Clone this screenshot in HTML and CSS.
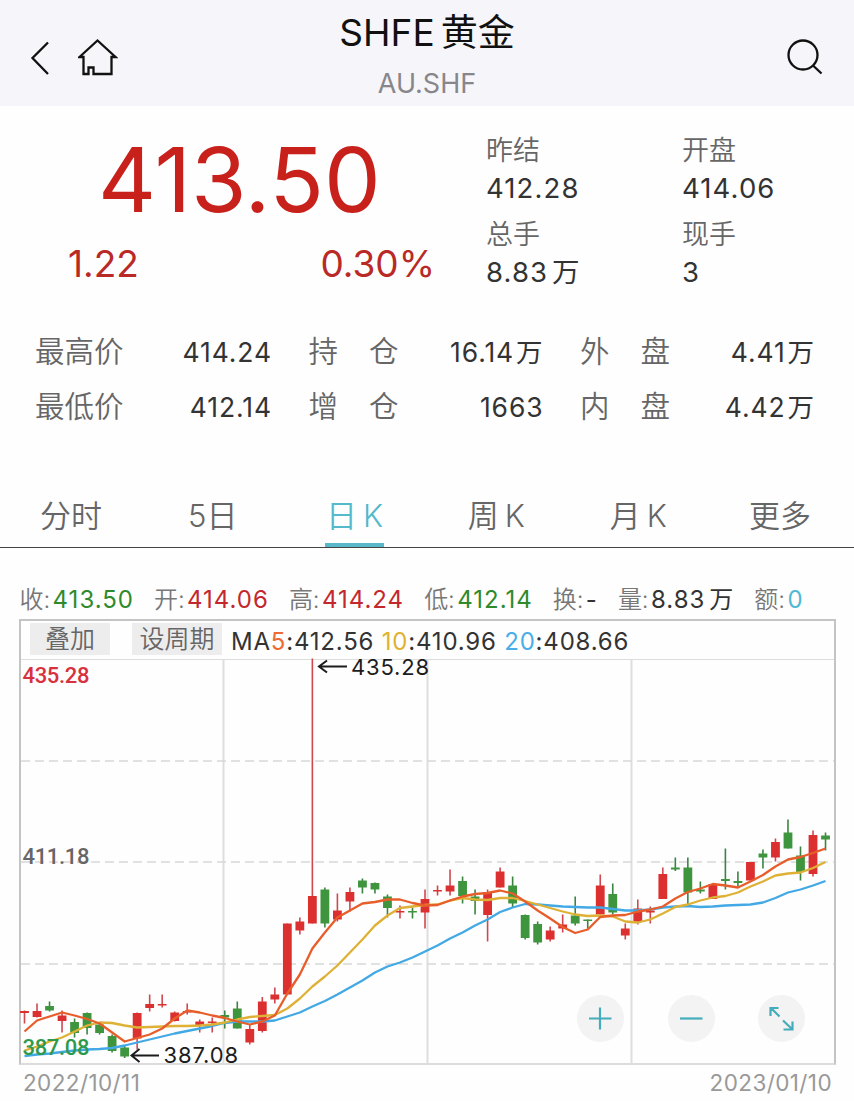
FILE: index.html
```html
<!DOCTYPE html>
<html lang="zh-CN">
<head>
    <meta charset="UTF-8">
    <meta name="viewport" content="width=device-width, initial-scale=1.0">
    <title>SHFE黄金</title>
    <link rel="stylesheet" href="styles.css">
</head>
<body>
    <header class="header">
        <div class="header-nav">
            <svg class="icon-back" width="20" height="36" viewBox="0 0 20 36"><path d="M18 2.500 L2.500 18 L18 34"/></svg>
            <svg class="icon-home" width="40" height="38" viewBox="0 0 40 38"><path d="M1.500 19 L19.500 2.500 L37.500 19 H33.500 V36 H15.500 V29.500 H10.500 V36 H5.500 V19 Z"/></svg>
        </div>
        <div class="header-title">
            <h1><span class="name-en">SHFE</span>黄金</h1>
            <p>AU.SHF</p>
        </div>
        <svg class="icon-search" width="38" height="38" viewBox="0 0 38 38"><circle cx="17" cy="17" r="14.500"/><path d="M27 27.500 L35.500 35.500"/></svg>
    </header>

    <section class="quote">
        <div class="quote-main">
            <div class="price">413.50</div>
            <div class="change"><span>1.22</span><span class="percent">0.30%</span></div>
        </div>
        <dl class="quote-side">
            <div><dt>昨结</dt><dd>412.28</dd></div>
            <div><dt>开盘</dt><dd>414.06</dd></div>
            <div><dt>总手</dt><dd>8.83<i>万</i></dd></div>
            <div><dt>现手</dt><dd>3</dd></div>
        </dl>
    </section>

    <section class="stats">
        <div class="stat"><span class="label">最高价</span><span class="value">414.24</span></div>
        <div class="stat"><span class="label wide">持仓</span><span class="value">16.14<i>万</i></span></div>
        <div class="stat"><span class="label wide">外盘</span><span class="value">4.41<i>万</i></span></div>
        <div class="stat"><span class="label">最低价</span><span class="value">412.14</span></div>
        <div class="stat"><span class="label wide">增仓</span><span class="value">1663</span></div>
        <div class="stat"><span class="label wide">内盘</span><span class="value">4.42<i>万</i></span></div>
    </section>

    <nav class="tabs">
        <a class="tab">分时</a>
        <a class="tab">5日</a>
        <a class="tab active">日<b>K</b></a>
        <a class="tab">周<b>K</b></a>
        <a class="tab">月<b>K</b></a>
        <a class="tab">更多</a>
    </nav>

    <div class="ohlc">
        <span>收:<b class="green">413.50</b></span>
        <span>开:<b class="red">414.06</b></span>
        <span>高:<b class="red">414.24</b></span>
        <span>低:<b class="green">412.14</b></span>
        <span>换:<b>-</b></span>
        <span>量:<b>8.83<i>万</i></b></span>
        <span>额:<b class="cyan">0</b></span>
    </div>

    <main class="chart">
        <div class="chart-bar">
            <button class="btn">叠加</button>
            <button class="btn btn-period">设周期</button>
            <span class="ma">MA<span class="ma5">5</span>:412.56 <span class="ma10">10</span>:410.96 <span class="ma20">20</span>:408.66</span>
        </div>
        <svg class="plot" id="plot" width="813" height="405" viewBox="21 659.500 813 405">
            <g class="grid">
                <path d="M223.500 659 V1063 M427.500 659 V1063 M631.500 659 V1063"/>
                <path class="dashed" d="M21 760.500 H834 M21 861.500 H834 M21 963.500 H834"/>
            </g>
            <g id="candles"></g>
            <polyline id="ma20" class="line line20"/>
            <polyline id="ma10" class="line line10"/>
            <polyline id="ma5" class="line line5"/>
            <g class="axis">
                <text x="22.500" y="682.500" textLength="67" class="top">435.28</text>
                <text x="22.500" y="863.500" textLength="67">411.18</text>
                <text x="22.500" y="1054" textLength="67" class="bottom">387.08</text>
            </g>
            <g class="mark">
                <path d="M347 666 H319 M327 660 L319 666 L327 672"/>
                <text x="351" y="674.500" textLength="78">435.28</text>
                <path d="M159 1055 H131.500 M139.500 1048.500 L131.500 1055 L139.500 1061.500"/>
                <text x="163.500" y="1062" textLength="74.500">387.08</text>
            </g>
        </svg>
        <div class="zoom">
            <button class="zoom-btn"><svg width="47" height="47" viewBox="0 0 47 47"><path d="M12 23.500 H34.500 M23 12.500 V34.500"/></svg></button>
            <button class="zoom-btn"><svg width="47" height="47" viewBox="0 0 47 47"><path d="M12 23.500 H34.500"/></svg></button>
            <button class="zoom-btn"><svg width="47" height="47" viewBox="0 0 47 47"><path d="M21.500 21.500 L13 13 M12.500 21 V13 H20.500 M25 25.500 L34 34 M34.500 26.500 V34.500 H25.500"/></svg></button>
        </div>
    </main>
    <footer class="dates"><span>2022/10/11</span><span>2023/01/10</span></footer>

    <script src="chart.js"></script>
</body>
</html>
```
FILE: styles.css
```css
* {
    box-sizing: border-box;
    margin: 0;
    padding: 0;
}
body {
    width: 854px;
    height: 1101px;
    overflow: hidden;
    background: #fefefe;
    color: #333;
    font-family: Inter, "Noto Sans CJK SC", sans-serif;
}
b, i {
    font-style: normal;
    font-weight: inherit;
}
button {
    border: 0;
    font-family: inherit;
}
svg {
    display: block;
    fill: none;
}

/* header */
.header {
    display: flex;
    justify-content: space-between;
    height: 106px;
    padding: 0 30px;
    background: #f6f6fa;
}
.header svg {
    stroke: #111;
    stroke-width: 2.3;
}
.header-nav {
    display: flex;
    gap: 28px;
    width: 160px;
    padding-top: 40px;
}
.icon-home {
    margin-top: -2px;
}
.header-title {
    text-align: center;
}
.header-title h1 {
    height: 66px;
    line-height: 66px;
    font-size: 37px;
    font-weight: 400;
    color: #111;
    white-space: nowrap;
}
.name-en {
    margin-right: 6px;
    font-size: 37px;
}
.header-title p {
    line-height: 36px;
    font-size: 27px;
    color: #87878b;
}
.icon-search {
    margin: 38px 0 0 122px;
}

/* quote */
.quote {
    display: flex;
    height: 222px;
    padding-top: 24px;
}
.quote-main {
    width: 486px;
    color: #c8201a;
}
.price {
    padding-left: 98px;
    line-height: 100px;
    font-size: 90px;
}
.change {
    display: flex;
    justify-content: space-between;
    padding: 9px 51px 0 68px;
    line-height: 50px;
    font-size: 37px;
    color: #b92a27;
}
.quote-side {
    display: grid;
    grid-template-columns: 196px 172px;
    grid-auto-rows: 84px;
    padding-top: 2px;
    font-size: 27px;
}
.quote-side dt {
    line-height: 38px;
    font-weight: 350;
    color: #666;
}
.quote-side dd {
    line-height: 37px;
    font-size: 27.5px;
    letter-spacing: 1.1px;
}
.quote-side i {
    margin-left: 4px;
}

/* stats */
.stats {
    display: grid;
    grid-template-columns: 237px 235px 235px;
    column-gap: 36.5px;
    grid-auto-rows: 55px;
    height: 156px;
    padding-left: 35px;
    line-height: 48px;
}
.stat {
    display: flex;
    justify-content: space-between;
}
.label {
    line-height: 46px;
    font-size: 29.5px;
    font-weight: 350;
    color: #666;
}
.wide {
    letter-spacing: 31px;
}
.value {
    font-size: 26.5px;
    letter-spacing: 0.9px;
    white-space: nowrap;
}
.value i {
    margin-left: 2px;
}

/* tabs */
.tabs {
    display: flex;
    height: 64px;
    padding-right: 3px;
    border-bottom: 1px solid #444;
}
.tab {
    position: relative;
    flex: 1;
    line-height: 63px;
    text-align: center;
    font-size: 31px;
    font-weight: 350;
    color: #666;
}
.tab b {
    margin-left: 6px;
}
.active {
    color: #53b9cb;
}
.active::after {
    content: "";
    position: absolute;
    left: 41px;
    bottom: 0;
    width: 59px;
    height: 4px;
    background: #58b7c8;
}

/* open / high / low line */
.ohlc {
    display: flex;
    gap: 20px;
    height: 71px;
    padding: 32px 0 0 19.5px;
    line-height: 40px;
    font-size: 24px;
    font-weight: 350;
    color: #777;
    white-space: nowrap;
}
.ohlc b {
    margin-left: 2.3px;
    font-weight: 400;
    letter-spacing: 1px;
    color: #333;
}
.ohlc i {
    margin-left: 4px;
}
.ohlc .green {
    color: #2f8a2b;
}
.ohlc .red {
    color: #c3282d;
}
.ohlc .cyan {
    color: #4fb9d3;
}

/* chart */
.chart {
    position: relative;
    width: 817px;
    height: 446px;
    margin-left: 19px;
    border: 2px solid #c4c4c4;
    border-bottom-color: #dcdcdc;
}
.chart-bar {
    display: flex;
    height: 39px;
    padding: 2px 0 0 9px;
    border-bottom: 1.5px solid #ddd;
}
.btn {
    width: 80px;
    height: 32px;
    line-height: 32px;
    background: #ededed;
    font-size: 25px;
    font-weight: 350;
    color: #666;
}
.btn-period {
    width: 90px;
    margin: 0 9px 0 22px;
}
.ma {
    line-height: 37px;
    font-size: 24px;
    letter-spacing: 0.8px;
    white-space: nowrap;
}
.ma5 {
    color: #ee6a35;
}
.ma10 {
    color: #dfb32f;
}
.ma20 {
    color: #49aee8;
}
.plot {
    overflow: visible;
}
.grid {
    stroke: #dedee0;
    stroke-width: 2;
}
.dashed {
    stroke: #d8d8d8;
    stroke-width: 1.6;
    stroke-dasharray: 9 5;
}
.up {
    fill: #dc3030;
    stroke: #cf4850;
}
.down {
    fill: #3f953e;
    stroke: #3b8440;
}
.candle-body {
    stroke: none;
}
.wick {
    stroke-width: 1.6;
}
.line {
    stroke-width: 2.3;
    stroke-linejoin: round;
}
.line5 {
    stroke: #e85e2b;
}
.line10 {
    stroke: #deb136;
}
.line20 {
    stroke: #42a9e5;
}
.axis {
    fill: #666;
    font-family: Roboto, sans-serif;
    font-size: 22px;
    font-weight: 500;
}
.axis .top {
    fill: #d9303e;
}
.axis .bottom {
    fill: #2e9a4c;
}
.mark {
    font-size: 22px;
}
.mark text {
    fill: #1c1c1c;
}
.mark path {
    stroke: #1c1c1c;
    stroke-width: 2;
}
.zoom {
    position: absolute;
    right: 29px;
    bottom: 21px;
    display: flex;
    gap: 43.5px;
}
.zoom-btn {
    width: 47px;
    height: 47px;
    border-radius: 50%;
    background: #f3f3f4;
}
.zoom-btn path {
    stroke: #45acbb;
    stroke-width: 2.2;
}
.dates {
    display: flex;
    justify-content: space-between;
    padding: 0 22px 0 23px;
    line-height: 36px;
    font-size: 22.5px;
    letter-spacing: 0.4px;
    color: #999;
}
```
FILE: chart.js
```js
// direction, wick top, body top, body bottom, wick bottom
const candles = [
    ['up', 1010, 1010.5, 1012.5, 1023], ['up', 1003, 1010.5, 1016.5, 1017], ['down', 1001, 1005.5, 1010, 1011],
    ['up', 1010, 1015, 1020.5, 1032], ['down', 1018, 1021.5, 1032.5, 1037], ['down', 1012, 1012.5, 1027.5, 1034],
    ['down', 1022, 1024, 1032.5, 1034], ['down', 1034, 1035.5, 1050.5, 1052], ['down', 1045, 1047, 1056, 1057.5],
    ['up', 1012, 1012.5, 1038, 1049], ['up', 994, 1003.5, 1007.5, 1011], ['up', 994, 1003.5, 1005, 1007],
    ['up', 1011, 1012, 1020.5, 1021], ['up', 1003, 1010.5, 1012, 1014], ['up', 1019, 1021, 1025, 1032],
    ['up', 1017, 1021, 1022.5, 1032], ['down', 1010, 1014.5, 1017, 1028], ['down', 1001, 1008, 1028, 1028],
    ['up', 1024, 1028.5, 1042, 1044], ['up', 996.5, 1001, 1030.5, 1032], ['up', 987, 994, 999, 1003],
    ['up', 923, 923, 994, 994], ['up', 917, 921, 930, 934], ['up', 658, 895.5, 923, 923],
    ['down', 887, 889, 923, 927], ['up', 893, 910, 919, 921], ['up', 887, 891.5, 901, 911],
    ['down', 878, 880, 887, 893], ['down', 882, 882.5, 889, 893], ['down', 894, 896, 907.5, 917],
    ['up', 905, 910.5, 912, 918], ['down', 907, 910.5, 912, 918], ['up', 889, 898.5, 912, 928],
    ['up', 885, 889.5, 891, 895], ['up', 869, 885, 891, 895], ['down', 876, 880.5, 895.5, 903],
    ['down', 889, 896, 900.5, 914], ['up', 889, 891.5, 914.5, 941], ['up', 867, 871, 887, 887],
    ['down', 876, 885, 903, 907], ['down', 914, 914.5, 937.5, 939], ['down', 921, 923.5, 942, 944],
    ['up', 926, 930, 939, 941], ['up', 914, 924, 928, 932], ['down', 896, 915, 923, 925],
    ['down', 919, 919, 920.5, 928], ['up', 874, 885, 914, 914], ['down', 883, 893.5, 912, 914],
    ['up', 923, 928, 935, 939], ['up', 899, 908, 921.5, 924], ['up', 906, 910, 912, 923],
    ['up', 867, 873.5, 898.5, 898.5], ['down', 857, 867, 869, 870.5], ['down', 857, 867, 892, 904],
    ['down', 881, 889, 891, 893], ['up', 883, 883.5, 898.5, 898.5], ['down', 848, 878.5, 880.5, 889],
    ['down', 871, 880.5, 882.5, 886], ['up', 861.5, 861.5, 880, 880], ['down', 849, 853, 857, 868],
    ['up', 838, 841.5, 857, 861], ['down', 819, 832, 848, 848], ['down', 846, 855, 871.5, 880],
    ['up', 830, 834.5, 873.5, 876], ['down', 832, 835, 839, 850]
];

const averages = {
    ma5: [
        1031, 1020, 1016, 1012, 1015, 1018.5, 1023, 1032, 1041, 1037.5,
        1034, 1028, 1018, 1010, 1012, 1015, 1017.5, 1021, 1024, 1021,
        1015, 993, 974, 948, 932, 917, 910, 903, 901.5, 899,
        899, 902.5, 905, 904.5, 900, 896, 893.5, 892.5, 890, 893,
        901, 910, 918, 926.5, 932.5, 929, 916.5, 915, 914.5, 911,
        909, 906, 898, 891.5, 888, 883.5, 885, 887, 881, 874.5,
        866, 859, 856.5, 852.5, 848
    ],
    ma10: [
        1050, 1046, 1041, 1037, 1031, 1025, 1022, 1022.5, 1025, 1027,
        1026.5, 1026, 1025.5, 1025.5, 1025, 1024, 1022, 1019, 1016.5, 1015.5,
        1014.5, 1008, 998, 986, 976, 965, 952, 939, 925, 915,
        907.5, 906, 904.5, 904, 900, 897.5, 899, 899.5, 897.5, 897.5,
        900.5, 904, 907.5, 911, 914, 915.5, 915, 916, 921, 922,
        919, 913, 906.5, 904, 900, 897, 895.5, 892, 886, 881,
        875, 873, 872, 867.5, 861.5
    ],
    ma20: [
        1055.5, 1054, 1053, 1051.5, 1050, 1049, 1048.5, 1047.5, 1045, 1042,
        1039, 1036, 1033, 1030.5, 1028, 1025.5, 1022.5, 1021, 1021, 1021,
        1020, 1016, 1012, 1006, 1000.5, 994, 987, 980, 972, 966,
        962, 957, 951, 945, 938, 932, 925, 919, 911.5, 907,
        903.5, 904, 905, 906, 906.5, 907, 907, 908.5, 910, 910,
        909, 907, 906, 905.5, 906.5, 906, 905, 904.5, 904, 902,
        897.5, 892, 889, 885, 880.5
    ]
};

const svgNS = 'http://www.w3.org/2000/svg';
const group = document.getElementById('candles');
const getX = i => 24.5 + i * 12.516;

candles.forEach(([dir, high, top, bottom, low], i) => {
    const wick = document.createElementNS(svgNS, 'path');
    wick.setAttribute('class', `wick ${dir}`);
    wick.setAttribute('d', `M${getX(i)} ${high} V${low}`);
    const body = document.createElementNS(svgNS, 'rect');
    body.setAttribute('class', `${dir} candle-body`);
    body.setAttribute('x', getX(i) - 4.4);
    body.setAttribute('y', top);
    body.setAttribute('width', 8.8);
    body.setAttribute('height', bottom - top);
    group.append(wick, body);
});

for (const id in averages) {
    const points = averages[id].map((y, i) => `${getX(i)},${y}`);
    document.getElementById(id).setAttribute('points', points.join(' '));
}
```
